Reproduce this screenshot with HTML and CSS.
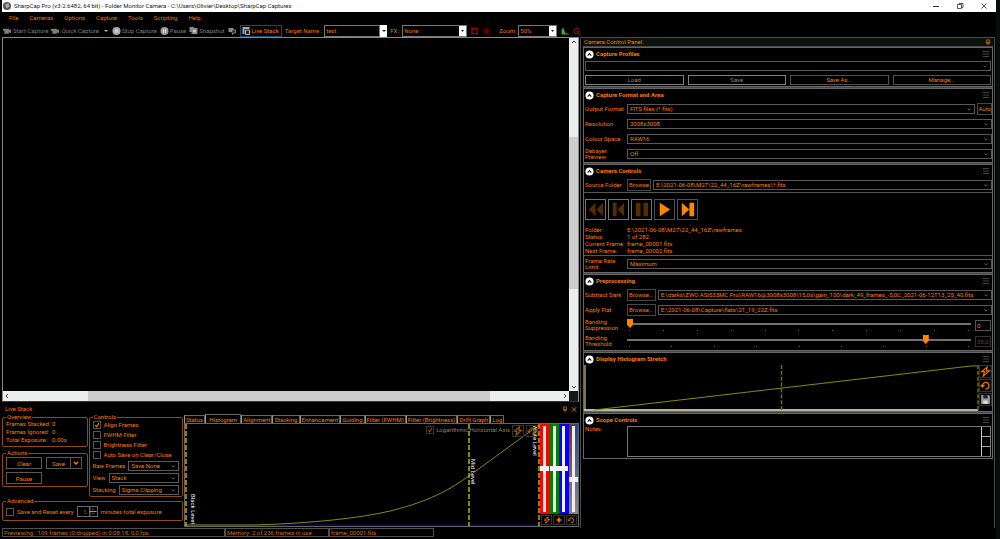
FILE: index.html
```html
<!DOCTYPE html>
<html lang="en">
<head>
<meta charset="utf-8">
<title>SharpCap Pro</title>
<link rel="stylesheet" href="styles.css">
</head>
<body>
<svg width="0" height="0" class="defs" aria-hidden="true">
  <symbol id="bolt" viewBox="0 0 10 10"><path d="M6.5 1 1.5 5.2h2.6L3 9l5.5-4.6H5.8z" fill="none" stroke="currentColor" stroke-width="1.1"/></symbol>
  <symbol id="reset" viewBox="0 0 10 10"><path d="M2.2 5.2a3 3 0 1 1 2.8 3M.6 4.6l1.6 1.8 1.8-1.8" fill="none" stroke="currentColor" stroke-width="1.2"/></symbol>
  <symbol id="spark" viewBox="0 0 10 10"><path d="M5 1 6.4 3.6 9 5 6.4 6.4 5 9 3.6 6.4 1 5l2.6-1.4z" fill="currentColor"/></symbol>
  <symbol id="menu" viewBox="0 0 8 8"><path d="M1 1.5h6M1 4h6M1 6.5h6" stroke="currentColor"/></symbol>
  <symbol id="up" viewBox="0 0 10 10"><circle cx="5" cy="5" r="4.5" fill="#fff"/><path d="M3 6.2 5 4l2 2.2" fill="none" stroke="#111" stroke-width="1.2"/></symbol>
  <symbol id="camera" viewBox="0 0 10 8"><path d="M0 1.5h6.5V3L9 2v4.5L6.5 5.5V7H1.5V4H0z" fill="currentColor"/></symbol>
  <symbol id="pin" viewBox="0 0 6 8"><path d="M1.5 1h3v3.5h-3zM.5 4.5h5M3 4.5V7" fill="none" stroke="currentColor" stroke-width=".8"/></symbol>
</svg>
<div class="window">
  <header class="titlebar">
    <svg class="logo" viewBox="0 0 8 8"><circle cx="4" cy="4" r="4" fill="#555"/><path d="M2 2.5 5.5 1 6.5 4.5 3.5 6.5z" fill="#aaa"/></svg>
    <h1>SharpCap Pro (v3.2.6482, 64 bit) - Folder Monitor Camera - C:\Users\Olivier\Desktop\SharpCap Captures</h1>
    <button aria-label="Minimize"><svg viewBox="0 0 8 8"><path d="M1 4.5h6" stroke="#333"/></svg></button>
    <button aria-label="Restore"><svg viewBox="0 0 8 8"><path d="M1.5 2.5h4v4h-4zM3 2.5v-1h4v4H5.500" fill="none" stroke="#333" stroke-width=".8"/></svg></button>
    <button aria-label="Close"><svg viewBox="0 0 8 8"><path d="M1.500 1.500l5 5M6.500 1.500l-5 5" stroke="#333" stroke-width=".8" fill="none"/></svg></button>
  </header>
  <nav class="menubar">
    <button>File</button><button>Cameras</button><button>Options</button><button>Capture</button><button>Tools</button><button>Scripting</button><button>Help</button>
  </nav>
  <div class="toolbar">
    <button class="off"><svg viewBox="0 0 10 8"><use href="#camera"/></svg>Start Capture</button>
    <button class="off"><svg viewBox="0 0 10 8"><use href="#camera"/></svg>Quick Capture<span class="caret"></span></button>
    <button class="off"><svg viewBox="0 0 8 8"><circle cx="4" cy="4" r="4" fill="#aaa"/><path d="M2.500 2.500h3v3h-3z" fill="#ccc"/></svg>Stop Capture</button>
    <button class="off"><svg viewBox="0 0 8 8"><circle cx="4" cy="4" r="4" fill="#999"/><path d="M3 2.200v3.600M5 2.200v3.600" stroke="#ddd"/></svg>Pause</button>
    <button class="off"><svg viewBox="0 0 8 8"><path d="M0 0h4l1 1h3v6H2V5H0z" fill="#888"/><circle cx="5" cy="4" r="1.600" fill="#ccc"/></svg>Snapshot</button>
    <button aria-label="Sequence"><svg viewBox="0 0 8 8"><path d="M0 1h5v4H0z" fill="#888"/><path d="M3 3h4v3H5L4 7.500z" fill="#222" stroke="#aaa" stroke-width=".7"/></svg></button>
    <button class="on"><svg viewBox="0 0 8 8"><path d="M0 0h7v2H2v5H0z" fill="#aaa"/><path d="M3 3h4v4.500H3z" fill="#222" stroke="#ddd" stroke-width=".8"/></svg>Live Stack</button>
    <label for="target">Target Name :</label>
    <span class="combo combo-target"><input id="target" value="test"><button aria-label="Show targets"></button></span>
    <label for="fx">FX :</label>
    <select id="fx" class="combo-select combo-fx"><option>None</option></select>
    <button aria-label="Selection area" class="tool-icon"><svg viewBox="0 0 8 8"><path d="M1.500 1.500h5v5h-5z" fill="none" stroke="#c00000"/><path d="M.5 .5h1.500v1.500H.5zM6 .5h1.500v1.500H6zM.5 6h1.500v1.500H.5zM6 6h1.500v1.500H6z" fill="#a00000"/></svg></button>
    <button aria-label="Reticule" class="tool-icon"><svg viewBox="0 0 8 8"><path d="M0 0l8 8M8 0L0 8M4 0v8M0 4h8" stroke="#8c0000" stroke-width=".6"/><circle cx="4" cy="4" r="2" fill="none" stroke="#8c0000" stroke-width=".6"/></svg></button>
    <label for="zoom" class="zoom-label">Zoom:</label>
    <select id="zoom" class="combo-select combo-zoom"><option>50%</option></select>
    <button aria-label="Histogram" class="tool-icon"><svg viewBox="0 0 8 8"><path d="M1 7.500V3l1.500-2.500L4 4l1 2.500h3v1z" fill="#4aa52e"/></svg></button>
    <button aria-label="Focus" class="tool-icon"><svg viewBox="0 0 8 8"><circle cx="4" cy="4" r="2.700" fill="none" stroke="#a31c0a" stroke-width=".9"/><path d="M3 4h2M6 6l2 2" stroke="#a31c0a"/></svg></button>
  </div>

  <div class="work">
    <main class="left">
      <section class="viewer" aria-label="Image">
        <div class="image"></div>
        <div class="vbar"><svg viewBox="0 0 8 8"><path d="M2 5l2-2 2 2" fill="none" stroke="#444"/></svg><span class="vtrack"><span class="vthumb"></span></span><svg viewBox="0 0 8 8"><path d="M2 3l2 2 2-2" fill="none" stroke="#444"/></svg></div>
        <div class="hbar"><svg viewBox="0 0 8 8"><path d="M5 2L3 4l2 2" fill="none" stroke="#444"/></svg><span class="htrack"><span class="hthumb"></span></span><svg viewBox="0 0 8 8"><path d="M3 2l2 2-2 2" fill="none" stroke="#444"/></svg></div>
        <div class="corner"></div>
      </section>

      <section class="live">
        <header class="live-head"><h2>Live Stack</h2><button aria-label="Pin panel"><svg viewBox="0 0 6 8"><use href="#pin"/></svg></button><button aria-label="Close panel"><svg viewBox="0 0 8 8"><path d="M1.500 1.500l5 5M6.500 1.500l-5 5" stroke="currentColor"/></svg></button></header>
        <div class="live-body">
          <div class="groups">
            <div class="stack">
              <fieldset><legend>Overview</legend>
                <dl class="facts"><dt>Frames Stacked:</dt><dd>0</dd><dt>Frames Ignored:</dt><dd>0</dd><dt>Total Exposure:</dt><dd>0.00s</dd></dl>
              </fieldset>
              <fieldset class="actions"><legend>Actions</legend>
                <div class="action-grid"><button>Clear</button><span class="split"><button>Save</button><button aria-label="Save options"><svg viewBox="0 0 8 8"><path d="M2 3l2 2 2-2" fill="none" stroke="currentColor" stroke-width="1.500"/></svg></button></span><button>Pause</button></div>
              </fieldset>
            </div>
            <fieldset class="controls"><legend>Controls</legend>
              <label class="tick"><input type="checkbox" checked>Align Frames</label>
              <label class="tick"><input type="checkbox">FWHM Filter</label>
              <label class="tick"><input type="checkbox">Brightness Filter</label>
              <label class="tick"><input type="checkbox">Auto Save on Clear/Close</label>
              <div class="pick"><label for="raw">Raw Frames</label><select id="raw"><option>Save None</option></select></div>
              <div class="pick"><label for="view">View</label><select id="view"><option>Stack</option></select></div>
              <div class="pick"><label for="stacking">Stacking</label><select id="stacking"><option>Sigma Clipping</option></select></div>
            </fieldset>
            <fieldset class="advanced"><legend>Advanced</legend>
              <div class="adv-row"><label class="tick"><input type="checkbox">Save and Reset every</label><span class="spin"><input id="mins" value="5"><svg viewBox="0 0 8 10"><path d="M.5 0v10M0 5h8" stroke="#9ab"/><path d="M2.500 3.500L4 2l1.500 1.500M2.500 6.500L4 8l1.500-1.500" fill="none" stroke="#a44a00"/></svg></span><label for="mins">minutes total exposure</label></div>
            </fieldset>
          </div>
          <div class="tabs-area">
            <div class="tabs" role="tablist">
              <button role="tab">Status</button><button role="tab" class="current">Histogram</button><button role="tab">Alignment</button><button role="tab">Stacking</button><button role="tab">Enhancement</button><button role="tab">Guiding</button><button role="tab">Filter (FWHM)</button><button role="tab">Filter (Brightness)</button><button role="tab">Drift Graph</button><button role="tab">Log</button>
            </div>
            <div class="histogram">
              <div class="plot">
                <svg class="curve" viewBox="0 0 355 102" preserveAspectRatio="none">
                  <path d="M0 101H355" stroke="#14146a"/>
                  <path d="M0 101H70C130 99 175 94 205 87C250 76 270 62 288 49C312 32 335 14 355 1" fill="none" stroke="#8c8c00"/>
                  <path d="M1 0V102M284 0V102M354 0V102" stroke="#b4b400" stroke-width="1.500" stroke-dasharray="5 2"/>
                </svg>
                <span class="level black-level">Black Level</span><span class="level mid-level">Mid Level</span><span class="level white-level">White Level</span>
                <div class="plot-tools"><label class="tick"><input type="checkbox" checked>Logarithmic Horizontal Axis</label><button aria-label="Auto stretch"><svg viewBox="0 0 10 10"><use href="#bolt"/></svg></button><button aria-label="Reset stretch"><svg viewBox="0 0 10 10"><use href="#reset"/></svg></button></div>
              </div>
              <div class="colours">
                <div class="bands">
                  <span class="band red"><input type="range" aria-label="Red" value="51"></span>
                  <span class="band green"><input type="range" aria-label="Green" value="51"></span>
                  <span class="band blue"><input type="range" aria-label="Blue" value="51"></span>
                  <span class="band sat"><input type="range" aria-label="Saturation" value="37"></span>
                </div>
                <div class="band-buttons"><button aria-label="Auto colour"><svg viewBox="0 0 10 10"><use href="#bolt"/></svg></button><button aria-label="Balance"><svg viewBox="0 0 10 10"><use href="#spark"/></svg></button><button aria-label="Reset colour"><svg viewBox="0 0 10 10"><use href="#reset"/></svg></button></div>
              </div>
            </div>
          </div>
        </div>
      </section>
    </main>

    <aside class="panel">
      <header class="panel-head"><h2>Camera Control Panel</h2><button aria-label="Pin panel"><svg viewBox="0 0 6 8"><use href="#pin"/></svg></button></header>
      <section class="card">
        <header><svg viewBox="0 0 10 10"><use href="#up"/></svg><h3>Capture Profiles</h3><svg class="burger" viewBox="0 0 8 8"><use href="#menu"/></svg></header>
        <div class="profiles"><select aria-label="Profile"><option></option></select>
        <div class="profile-buttons"><button disabled>Load</button><button disabled>Save</button><button>Save As...</button><button>Manage...</button></div></div>
      </section>
      <section class="card">
        <header><svg viewBox="0 0 10 10"><use href="#up"/></svg><h3>Capture Format and Area</h3><svg class="burger" viewBox="0 0 8 8"><use href="#menu"/></svg></header>
        <div class="row"><label for="fmt">Output Format</label><select id="fmt"><option>FITS files (*.fits)</option></select><button>Auto</button></div>
        <div class="row"><label for="res">Resolution</label><select id="res"><option>3008x3008</option></select></div>
        <div class="row"><label for="space">Colour Space</label><select id="space"><option>RAW16</option></select></div>
        <div class="row"><label for="deb">Debayer Preview</label><select id="deb"><option>Off</option></select></div>
      </section>
      <section class="card">
        <header><svg viewBox="0 0 10 10"><use href="#up"/></svg><h3>Camera Controls</h3><svg class="burger" viewBox="0 0 8 8"><use href="#menu"/></svg></header>
        <div class="row"><label for="src">Source Folder</label><button>Browse</button><select id="src"><option>E:\2021-06-08\M27\22_44_16Z\rawframes\*.fits</option></select></div>
        <div class="player">
          <div class="transport">
            <button disabled aria-label="Rewind"><svg viewBox="0 0 20 20"><path d="M10 3v14L3 10zM18 3v14l-7-7z"/></svg></button>
            <button disabled aria-label="Previous frame"><svg viewBox="0 0 20 20"><path d="M4 3h4v14H4zM16 3v14l-7-7z"/></svg></button>
            <button disabled aria-label="Pause"><svg viewBox="0 0 20 20"><path d="M4 3h5v14H4zM12 3h5v14h-5z"/></svg></button>
            <button aria-label="Play"><svg viewBox="0 0 20 20"><path d="M5 3l11 7-11 7z"/></svg></button>
            <button aria-label="Next frame"><svg viewBox="0 0 20 20"><path d="M4 3l8 7-8 7zM12 3h5v14h-5z"/></svg></button>
          </div>
          <dl class="info"><dt>Folder:</dt><dd>E:\2021-06-08\M27\22_44_16Z\rawframes</dd><dt>Status:</dt><dd>1 of 282</dd><dt>Current Frame:</dt><dd>frame_00001.fits</dd><dt>Next Frame:</dt><dd>frame_00002.fits</dd></dl>
        </div>
        <div class="row"><label for="rate">Frame Rate Limit</label><select id="rate"><option>Maximum</option></select></div>
      </section>
      <section class="card">
        <header><svg viewBox="0 0 10 10"><use href="#up"/></svg><h3>Preprocessing</h3><svg class="burger" viewBox="0 0 8 8"><use href="#menu"/></svg></header>
        <div class="row"><label for="dark">Subtract Dark</label><button>Browse...</button><select id="dark"><option>E:\darks\ZWO ASI533MC Pro\RAW16@3008x3008\15,0s\gain_100\dark_49_frames_-5,0C_2021-06-12T13_25_40.fits</option></select></div>
        <div class="row"><label for="flat">Apply Flat</label><button>Browse...</button><select id="flat"><option>E:\2021-06-08\Capture\flats\21_19_22Z.fits</option></select></div>
        <div class="row slide-row"><label for="bs">Banding Suppression</label><span class="slide"><input id="bs" type="range" min="0" max="10" value="0"><span class="ticks"><i></i><i></i><i></i><i></i><i></i><i></i><i></i><i></i><i></i><i></i><i></i></span></span><input class="num" value="0" aria-label="Suppression value"></div>
        <div class="row slide-row"><label for="bt">Banding Threshold</label><span class="slide"><input id="bt" type="range" min="0" max="40" value="35"><span class="ticks"><i></i><i></i><i></i><i></i><i></i><i></i><i></i><i></i><i></i></span></span><input class="num dim" value="35,0" aria-label="Threshold value"></div>
      </section>
      <section class="card stretch">
        <header><svg viewBox="0 0 10 10"><use href="#up"/></svg><h3>Display Histogram Stretch</h3><svg class="burger" viewBox="0 0 8 8"><use href="#menu"/></svg></header>
        <div class="stretch-body">
          <svg class="line" viewBox="0 0 398 47" preserveAspectRatio="none"><path d="M0 46H397" stroke="#f4f4d0" stroke-width="1.500"/><path d="M10 46L390 1H397" fill="none" stroke="#8c8c00"/><path d="M1 0V46" stroke="#f0f0a0"/><path d="M199 0V46M397 0V46" stroke="#6e6e10" stroke-width="1.500" stroke-dasharray="4 2"/></svg>
          <div class="side"><button aria-label="Auto stretch"><svg viewBox="0 0 10 10"><use href="#bolt"/></svg></button><button aria-label="Reset"><svg viewBox="0 0 10 10"><use href="#reset"/></svg></button><button aria-label="Save stretch"><svg viewBox="0 0 10 10"><path d="M1 1h7l1 1v7H1z" fill="#999"/><path d="M3 1h4v3H3z" fill="#222"/><path d="M3 6h4v3H3z" fill="#ddd"/></svg></button></div>
        </div>
      </section>
      <section class="card">
        <header><svg viewBox="0 0 10 10"><use href="#up"/></svg><h3>Scope Controls</h3><svg class="burger" viewBox="0 0 8 8"><use href="#menu"/></svg></header>
        <div class="row notes"><label for="notes">Notes</label><span class="notes-box"><textarea id="notes"></textarea><span class="nbar"><i></i><i></i><i></i></span></span></div>
      </section>
    </aside>
  </div>
  <footer class="status"><span class="s1">Previewing : 109 frames (0 dropped) in 0:08:18, 0,0 fps</span><span class="s2">Memory: 2 of 236 frames in use.</span><span class="s3">frame_00001.fits</span></footer>
</div>
</body>
</html>
```

FILE: styles.css
```css
:root {
  --orange: #f87c00;
  --frame: #585858;
  --ui: Roboto, "Liberation Sans", sans-serif;
}
* { box-sizing: border-box; }
body { margin: 0; background: #0b0d0d; color: var(--orange); font: 6px/8px var(--ui); }
button, input, select, textarea { font: inherit; color: inherit; background: none; border: 0; border-radius: 0; margin: 0; padding: 0; min-width: 0; }
select { appearance: none; border: 1px solid var(--frame); padding: 0 12px 0 2px; height: 10px; line-height: 8px;
  background: url("data:image/svg+xml,%3Csvg xmlns='http://www.w3.org/2000/svg' viewBox='0 0 8 8'%3E%3Cpath d='M2.500 3.500l1.500 1.500 1.500-1.500' fill='none' stroke='%23555'/%3E%3C/svg%3E") right 1px center / 8px 8px no-repeat; }
button { white-space: nowrap; text-align: center; }
svg { display: block; }
h1, h2, h3, dl, dd { margin: 0; font-size: inherit; font-weight: normal; }
.defs { position: absolute; }

.window { min-height: 100vh; display: flex; flex-direction: column; background: #000; margin-right: 4px; }

.titlebar { display: flex; align-items: center; height: 12px; background: #fefefe; color: #222; margin-left: 2px; padding: 0 2px 0 1px; gap: 3px; }
.titlebar .logo { width: 8px; height: 8px; }
.titlebar h1 { flex: 1; white-space: nowrap; }
.titlebar button { width: 21px; display: flex; justify-content: center; }
.titlebar button svg { width: 8px; height: 8px; }
.menubar { display: flex; gap: 11px; height: 12px; padding-left: 9px; color: #e07400; }

.toolbar { display: flex; align-items: center; height: 13px; padding-left: 3px; gap: 3px; color: #e07400; white-space: nowrap; }
.toolbar button { display: flex; align-items: center; gap: 1px; }
.toolbar svg { width: 9px; height: 8px; }
.toolbar .off { color: #7c7c7c; }
.caret { border: 2px solid transparent; border-top-color: #bbb; border-bottom: 0; margin: 0 1px 0 4px; }
.toolbar .on { border: 1px solid #16497a; color: var(--orange); height: 12px; padding: 0 2px 0 1px; }
.toolbar label { margin-right: -1px; }
.combo { display: flex; }
.combo input, .combo-select { border: 1px solid #777; height: 12px; padding: 0 1px; }
.combo input { flex: 1; }
.toolbar .combo button { width: 7px; flex: none; background: #fff; justify-content: center; }
.combo button::after { content: ""; border: 2px solid transparent; border-top-color: #222; border-bottom: 0; }
.combo-target { width: 63px; }
.combo-fx { width: 65px; }
.combo-zoom { width: 39px; }
.combo-select { background: url("data:image/svg+xml,%3Csvg xmlns='http://www.w3.org/2000/svg' viewBox='0 0 7 12'%3E%3Cpath fill='%23fff' d='M0 0h7v12H0z'/%3E%3Cpath d='M2 5h3L3.500 7z' fill='%23222'/%3E%3C/svg%3E") right center / 7px 12px no-repeat; }
.toolbar .tool-icon + .zoom-label { margin-left: 5px; }

.work { flex: 1; display: grid; grid-template-columns: 580fr 416fr; min-height: 0; }
.left { display: flex; flex-direction: column; min-width: 0; }
.viewer { flex: 1; display: grid; grid-template: 1fr 10px / 1fr 9px; border: 1px solid #8a8a8a; border-bottom-color: #3a3a3a; margin: 0 1px 0 2px; }
.vbar, .hbar { background: #eceeed; display: flex; }
.vbar { flex-direction: column; align-items: center; }
.hbar { align-items: center; }
.vbar svg, .hbar svg { width: 8px; height: 8px; }
.vtrack, .htrack { flex: 1; position: relative; align-self: stretch; }
.vthumb { position: absolute; left: 0; right: 0; top: 27%; height: 45%; background: #cdcdcd; }
.hthumb { position: absolute; top: 0; bottom: 0; left: 14%; width: 73%; background: #cdcdcd; }
.corner { background: #161616; }

.live-head { display: flex; align-items: center; height: 12px; padding: 2px 2px 0 5px; }
.live-head h2 { flex: 1; }
.live-head button { width: 9px; display: flex; justify-content: center; }
.live-head svg { height: 7px; width: 8px; }
.live-body { display: grid; grid-template-columns: 184fr 396fr; min-height: 114px; }
.groups { display: grid; grid-template-columns: 86fr 95fr; gap: 1px; padding: 0 1px 4px 2px; align-content: start; white-space: nowrap; }
fieldset { margin: 0; padding: 0 3px 2px; border: 1px solid #8f4a08; border-radius: 2px; min-width: 0; }
legend { padding: 0 1px; line-height: 6px; }
.stack { display: flex; flex-direction: column; gap: 3px; }
.facts { display: grid; grid-template-columns: 46px 1fr; }
.action-grid { display: grid; grid-template-columns: 36px 36px; gap: 3px 4px; padding-top: 1px; }
.action-grid button { border: 1px solid var(--frame); height: 12px; line-height: 9px; }
.split { display: grid; grid-template-columns: 1fr 11px; }
.split button + button { border-left: 0; display: grid; place-items: center; }
.split svg { width: 8px; height: 8px; }
.tick { display: flex; align-items: center; gap: 3px; height: 10px; }
.tick input { appearance: none; width: 8px; height: 8px; border: 1px solid #555; flex: none; }
.tick input:checked { background: url("data:image/svg+xml,%3Csvg xmlns='http://www.w3.org/2000/svg' viewBox='0 0 8 8'%3E%3Cpath d='M1.500 4l2 2.500 3-5' fill='none' stroke='%23f08000' stroke-width='1.500'/%3E%3C/svg%3E") center / contain; }
.pick { display: flex; align-items: center; gap: 3px; height: 12px; }
.pick select { flex: 1; }
.controls { padding-bottom: 0; }
.advanced { grid-column: 1 / -1; padding-bottom: 3px; }
.adv-row { display: flex; align-items: center; gap: 3px; padding-top: 2px; }
.spin { display: flex; border: 1px solid #667; width: 21px; height: 11px; }
.spin input { width: 11px; text-align: right; padding-right: 2px; color: #7a4a18; }
.spin svg { width: 8px; height: 9px; }

.tabs-area { display: flex; flex-direction: column; min-width: 0; padding: 0 1px 1px 0; }
.tabs { display: flex; height: 9px; align-items: end; }
.tabs button { border: 1px solid #666; border-bottom: 0; border-left-color: #999; height: 8px; line-height: 7px; padding: 0 1px; }
.tabs .current { height: 9px; padding: 0 3px; }
.histogram { flex: 1; display: grid; grid-template-columns: 1fr 38px; border: 1px solid #666; }
.plot { position: relative; }
.curve { position: absolute; width: 100%; height: 100%; }
.level { position: absolute; writing-mode: vertical-rl; color: #fff; white-space: nowrap; }
.black-level { left: 1%; bottom: 2%; }
.mid-level { left: 80%; top: 34%; }
.white-level { right: 1px; top: 1px; }
.plot-tools { position: absolute; top: 1px; right: 2px; display: flex; gap: 2px; color: #808080; white-space: nowrap; }
.plot-tools .tick { gap: 2px; }
.plot-tools button { border: 1px solid #333; width: 12px; height: 12px; color: #a65408; }
.plot-tools input { opacity: .6; }
.colours { display: flex; flex-direction: column; padding-bottom: 1px; }
.bands { flex: 1; display: grid; grid-template-columns: repeat(4, 1fr); }
.band { position: relative; }
.band input { position: absolute; inset: 2px 0; width: 100%; height: calc(100% - 4px); appearance: none; writing-mode: vertical-lr; direction: rtl; background: linear-gradient(#eee, #eee) center / 3px 100% no-repeat; }
.band input::-webkit-slider-thumb { appearance: none; width: 9px; height: 5px; background: #f2f2f2; }
.red { background: #f00; }
.green { background: #008000; }
.blue { background: #00f; }
.sat { background: linear-gradient(transparent, #888), linear-gradient(90deg, #c00, #1a6a20 50%, #1238e0); }
.band-buttons { display: grid; grid-template-columns: repeat(3, 1fr); gap: 1px; padding: 1px 1px 0; }
.band-buttons button { border: 1px solid #333; height: 10px; display: grid; place-items: center; color: #f07000; }
.band-buttons svg { width: 8px; height: 8px; }

.panel { display: flex; flex-direction: column; border: solid #4c4c4c; border-width: 1px 1px 0 1px; padding: 0 1px 0 2px; margin-right: 1px; min-width: 0; }
.panel-head { display: flex; align-items: center; height: 8px; padding: 0 2px 0 1px; background: #0c120c; }
.panel-head h2 { flex: 1; }
.panel-head svg { width: 6px; height: 7px; }
.card { border: 1px solid #666; box-shadow: 0 -1px #484848; margin-top: 1px; padding-bottom: 1px; display: flex; flex-direction: column; }
.card header { display: flex; align-items: center; gap: 2px; height: 12px; padding: 0 2px 0 1px; }
.card h3 { flex: 1; font-weight: bold; }
.card header svg { width: 9px; height: 9px; }
.card header .burger { width: 8px; height: 8px; color: #444; }
.profiles { padding: 1px 1px 0; display: grid; gap: 4px; }
.profile-buttons { display: grid; grid-template-columns: repeat(4, 1fr); gap: 4px; }
.profile-buttons button { border: 1px solid #505050; height: 10px; line-height: 8px; }
.profile-buttons button:disabled { color: #858585; border-color: #7a8484; }
.row { display: flex; align-items: center; gap: 2px; height: 15px; padding-left: 1px; }
.row > label { width: 40px; flex: none; line-height: 6px; }
.row select { flex: 1; }
.row button { border: 1px solid #484848; height: 12px; line-height: 9px; padding: 0 1px; }
.row select + button { padding: 0; }
.player { border: solid #555; border-width: 1px 0; padding: 6px 1px 1px; }
.transport { display: flex; gap: 2px; }
.transport button { border: 1px solid #505050; width: 21px; height: 21px; fill: #ff8400; }
.transport button:disabled { border-color: #6c7878; fill: #532c00; }
.info { display: grid; grid-template-columns: 42px 1fr; line-height: 7px; padding-top: 6px; white-space: nowrap; }
.slide-row { height: 16px; }
.slide { flex: 1; display: flex; flex-direction: column; }
.slide input { appearance: none; height: 9px; background: linear-gradient(#707070, #707070) center / 100% 2px no-repeat; }
.slide input::-webkit-slider-thumb { appearance: none; width: 6px; height: 9px; background: #ff8400; clip-path: polygon(0 0, 100% 0, 100% 65%, 50% 100%, 0 65%); }
.ticks { display: flex; justify-content: space-between; padding: 2px 2px 0; }
.ticks i { width: 1px; height: 1px; background: #9c5000; }
.num { width: 16px; border: 1px solid #555; height: 11px; padding: 0 1px; margin: 0 1px 0 2px; }
.num.dim { color: #7c4208; border-color: #333; }
.stretch { padding-bottom: 0; }
.stretch-body { display: grid; grid-template-columns: 1fr 13px; }
.line { width: 100%; height: 46px; }
.side { display: flex; flex-direction: column; gap: 1px; }
.side button { border: 1px solid #333; height: 13px; color: #f07000; display: grid; place-items: center; }
.side svg { width: 11px; height: 11px; }
.row.notes { height: 31px; align-items: start; }
.notes-box { flex: 1; display: flex; height: 31px; border: 1px solid #777; margin-right: 1px; }
.notes-box textarea { flex: 1; resize: none; height: 29px; }
.nbar { width: 9px; display: grid; border-left: 1px solid #ccc; }
.nbar i + i { border-top: 1px solid #aaa; }

.status { display: flex; height: 11px; align-items: center; color: #c8700f; padding: 0 0 2px 2px; }
.status span { border: 1px solid #505050; height: 9px; line-height: 7px; padding-left: 1px; white-space: nowrap; }
.s1 { width: 223px; }
.s2 { width: 104px; }
.s3 { width: 105px; }
```
